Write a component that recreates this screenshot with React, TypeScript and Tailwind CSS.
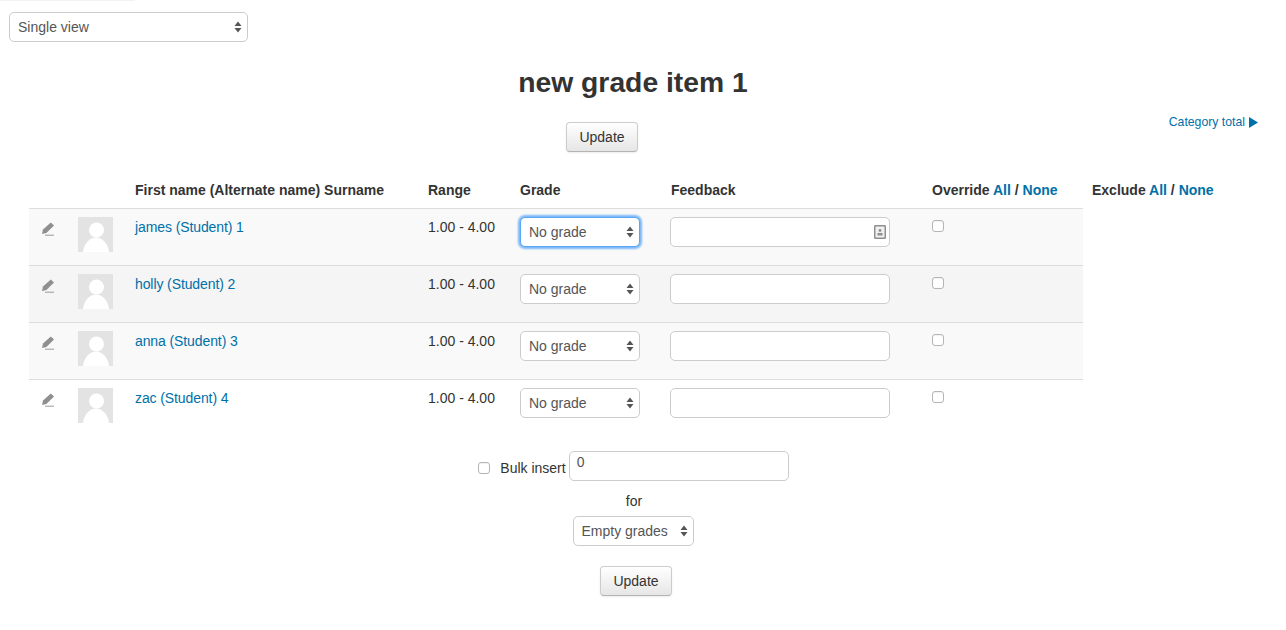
import { ReactNode } from 'react';

const students = [
  { name: 'james (Student) 1', bg: 'bg-[#f9f9f9]', focused: true },
  { name: 'holly (Student) 2', bg: 'bg-[#f5f5f5]', focused: false },
  { name: 'anna (Student) 3', bg: 'bg-[#f9f9f9]', focused: false },
  { name: 'zac (Student) 4', bg: 'bg-white', focused: false },
];

function Arrows() {
  return (
    <svg width="8" height="14" viewBox="0 0 8 14" className="shrink-0">
      <path d="M4 1.5 L7.5 6 L0.5 6 Z M4 12.5 L7.5 8 L0.5 8 Z" fill="#555" />
    </svg>
  );
}

function Select({ label, className }: { label: string; className: string }) {
  return (
    <div className={`flex items-center justify-between h-[30px] bg-white rounded-[5px] border pl-[8px] pr-[5px] text-[#555] ${className}`}>
      <span>{label}</span>
      <Arrows />
    </div>
  );
}

function Button({ className = '' }: { className?: string }) {
  return (
    <button className={`w-[72px] h-[30px] rounded-[4px] border border-[#ccc] border-b-[#b3b3b3] bg-gradient-to-b from-white to-[#e6e6e6] text-[#333] shadow-[0_1px_2px_rgba(0,0,0,0.08)] ${className}`}>
      Update
    </button>
  );
}

function Check({ className = '' }: { className?: string }) {
  return <span className={`block w-[12px] h-[12px] rounded-[3px] border border-[#b5b5b5] bg-white shadow-[inset_0_1px_1px_rgba(0,0,0,0.06)] ${className}`} />;
}

function Head({ w, children }: { w: string; children: ReactNode }) {
  return <div className={`${w} shrink-0 font-bold`}>{children}</div>;
}

function Avatar() {
  return (
    <svg width="35" height="35" viewBox="0 0 35 35" className="shrink-0">
      <rect width="35" height="35" fill="#e3e3e3" />
      <circle cx="18.5" cy="13" r="7.5" fill="#fff" />
      <path d="M5 35 C6 26 12 20.5 18 20.5 C24 20.5 30 26 31 35 Z" fill="#fff" />
    </svg>
  );
}

function Pencil() {
  return (
    <svg width="14" height="14" viewBox="0 0 14 14">
      <path d="M9.8 0.6 L13 3.4 L5.4 11 L1 12 L2 7.6 Z" fill="#8f8f8f" />
      <path d="M4 13.2 L13 13.2" stroke="#8f8f8f" strokeWidth="0.9" />
    </svg>
  );
}

function NoteIcon() {
  return (
    <svg width="12" height="14" viewBox="0 0 12 14">
      <rect x="0.75" y="0.75" width="10.5" height="12.5" rx="0.5" fill="#f0f0f0" stroke="#8f8f8f" strokeWidth="1.5" />
      <circle cx="6" cy="5.5" r="1.4" fill="#8f8f8f" />
      <rect x="3.5" y="8" width="5" height="2.5" fill="#8f8f8f" />
    </svg>
  );
}

export default function App() {
  return (
    <div className="relative w-[1286px] h-[630px] bg-white text-[14px] leading-[20px] text-[#333] overflow-hidden font-['Liberation_Sans',Arial,sans-serif]">
      <div className="w-[135px] h-px bg-[#f3f3f3]" />

      <div className="pl-[9px] pt-[11px]">
        <Select label="Single view" className="w-[239px] border-[#ccc]" />
      </div>

      <h1 className="text-center text-[28.3px] leading-[40px] font-bold mt-[20px] pr-[20px]">new grade item 1</h1>

      <div className="flex items-start mt-[20px] pl-[566px] pr-[28px]">
        <Button />
        <a className="ml-auto -mt-[10px] flex items-center gap-[4px] text-[12.25px] text-[#0070a8]">
          Category total
          <svg width="9" height="11" viewBox="0 0 9 11">
            <path d="M0 0 L9 5.5 L0 11 Z" fill="#0070a8" />
          </svg>
        </a>
      </div>

      <div className="flex h-[56px] items-end pb-[8px] pl-[135px]">
        <Head w="w-[293px]">First name (Alternate name) Surname</Head>
        <Head w="w-[92px]">Range</Head>
        <Head w="w-[151px]">Grade</Head>
        <Head w="w-[261px]">Feedback</Head>
        <Head w="w-[160px]">
          Override <a className="text-[#0070a8]">All</a> / <a className="text-[#0070a8]">None</a>
        </Head>
        <Head w="w-[150px]">
          Exclude <a className="text-[#0070a8]">All</a> / <a className="text-[#0070a8]">None</a>
        </Head>
      </div>

      <div className="ml-[29px] w-[1054px]">
        {students.map(s => (
          <div key={s.name} className={`flex items-start h-[57px] border-t border-[#ddd] pt-[8px] ${s.bg}`}>
            <div className="w-[49px] shrink-0 pl-[12px] pt-[5px]"><Pencil /></div>
            <div className="w-[57px] shrink-0"><Avatar /></div>
            <a className="w-[293px] shrink-0 text-[#0070a8] tracking-[-0.1px]">{s.name}</a>
            <div className="w-[92px] shrink-0">1.00 - 4.00</div>
            <div className="w-[150px] shrink-0">
              <Select
                label="No grade"
                className={`w-[120px] ${s.focused ? 'border-[#5aa7f5] shadow-[0_0_2px_2px_#7db8f8]' : 'border-[#ccc]'}`}
              />
            </div>
            <div className="w-[262px] shrink-0">
              <div className="flex items-center justify-end w-[220px] h-[30px] bg-white rounded-[5px] border border-[#ccc] pr-[3px]">
                {s.focused && <NoteIcon />}
              </div>
            </div>
            <div className="pt-[3px]"><Check /></div>
          </div>
        ))}
      </div>

      <div className="flex items-start justify-center mt-[15px] pr-[19px]">
        <label className="flex items-center h-[30px] pt-[3px]">
          <Check className="mr-[10px]" />
          Bulk insert
        </label>
        <div className="ml-[3px] w-[220px] h-[30px] bg-white rounded-[5px] border border-[#ccc] pl-[7px] text-[#555]">0</div>
      </div>
      <div className="text-center mt-[10px] pr-[18px]">for</div>
      <div className="flex justify-center mt-[5px] pr-[20px]">
        <Select label="Empty grades" className="w-[121px] border-[#ccc]" />
      </div>
      <div className="flex justify-center mt-[20px] pr-[14px]">
        <Button />
      </div>
    </div>
  );
}
